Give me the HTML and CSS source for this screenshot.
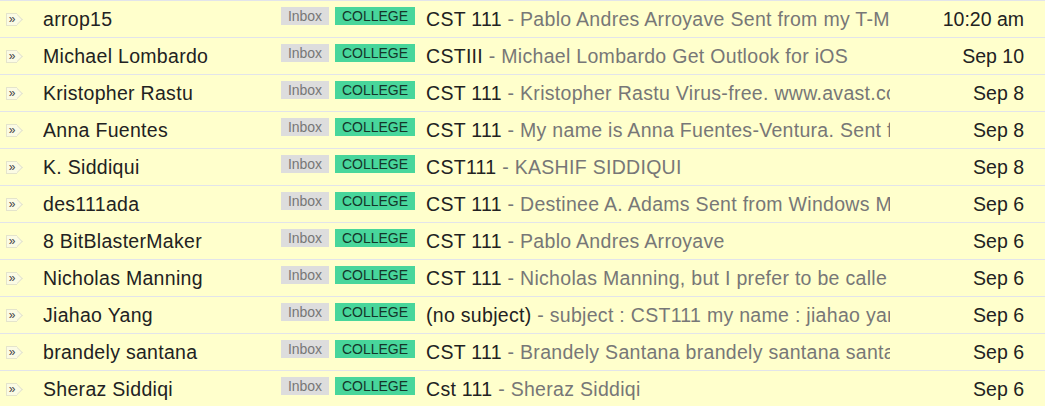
FILE: index.html
```html
<!doctype html>
<html>
<head>
<meta charset="utf-8">
<title>Inbox</title>
<link rel="stylesheet" href="styles.css">
</head>
<body>
<div class="list">
	<div class="row">
		<div class="mark"><span class="imp">&raquo;</span></div>
		<div class="from">arrop15</div>
		<div class="labels"><span class="lb inbox">Inbox</span><span class="lb college">COLLEGE</span></div>
		<div class="subj"><b>CST 111</b><i> - Pablo Andres Arroyave Sent from my T-M</i></div>
		<div class="date">10:20 am</div>
	</div>
	<div class="row">
		<div class="mark"><span class="imp">&raquo;</span></div>
		<div class="from">Michael Lombardo</div>
		<div class="labels"><span class="lb inbox">Inbox</span><span class="lb college">COLLEGE</span></div>
		<div class="subj"><b>CSTIII</b><i> - Michael Lombardo Get Outlook for iOS</i></div>
		<div class="date">Sep 10</div>
	</div>
	<div class="row">
		<div class="mark"><span class="imp">&raquo;</span></div>
		<div class="from">Kristopher Rastu</div>
		<div class="labels"><span class="lb inbox">Inbox</span><span class="lb college">COLLEGE</span></div>
		<div class="subj"><b>CST 111</b><i> - Kristopher Rastu Virus-free. www.avast.co</i></div>
		<div class="date">Sep 8</div>
	</div>
	<div class="row">
		<div class="mark"><span class="imp">&raquo;</span></div>
		<div class="from">Anna Fuentes</div>
		<div class="labels"><span class="lb inbox">Inbox</span><span class="lb college">COLLEGE</span></div>
		<div class="subj"><b>CST 111</b><i> - My name is Anna Fuentes-Ventura. Sent f</i></div>
		<div class="date">Sep 8</div>
	</div>
	<div class="row">
		<div class="mark"><span class="imp">&raquo;</span></div>
		<div class="from">K. Siddiqui</div>
		<div class="labels"><span class="lb inbox">Inbox</span><span class="lb college">COLLEGE</span></div>
		<div class="subj"><b>CST111</b><i> - KASHIF SIDDIQUI</i></div>
		<div class="date">Sep 8</div>
	</div>
	<div class="row">
		<div class="mark"><span class="imp">&raquo;</span></div>
		<div class="from">des111ada</div>
		<div class="labels"><span class="lb inbox">Inbox</span><span class="lb college">COLLEGE</span></div>
		<div class="subj"><b>CST 111</b><i> - Destinee A. Adams Sent from Windows M</i></div>
		<div class="date">Sep 6</div>
	</div>
	<div class="row">
		<div class="mark"><span class="imp">&raquo;</span></div>
		<div class="from">8 BitBlasterMaker</div>
		<div class="labels"><span class="lb inbox">Inbox</span><span class="lb college">COLLEGE</span></div>
		<div class="subj"><b>CST 111</b><i> - Pablo Andres Arroyave</i></div>
		<div class="date">Sep 6</div>
	</div>
	<div class="row">
		<div class="mark"><span class="imp">&raquo;</span></div>
		<div class="from">Nicholas Manning</div>
		<div class="labels"><span class="lb inbox">Inbox</span><span class="lb college">COLLEGE</span></div>
		<div class="subj"><b>CST 111</b><i> - Nicholas Manning, but I prefer to be calle</i></div>
		<div class="date">Sep 6</div>
	</div>
	<div class="row">
		<div class="mark"><span class="imp">&raquo;</span></div>
		<div class="from">Jiahao Yang</div>
		<div class="labels"><span class="lb inbox">Inbox</span><span class="lb college">COLLEGE</span></div>
		<div class="subj"><b>(no subject)</b><i> - subject : CST111 my name : jiahao yar</i></div>
		<div class="date">Sep 6</div>
	</div>
	<div class="row">
		<div class="mark"><span class="imp">&raquo;</span></div>
		<div class="from">brandely santana</div>
		<div class="labels"><span class="lb inbox">Inbox</span><span class="lb college">COLLEGE</span></div>
		<div class="subj"><b>CST 111</b><i> - Brandely Santana brandely santana santa</i></div>
		<div class="date">Sep 6</div>
	</div>
	<div class="row">
		<div class="mark"><span class="imp">&raquo;</span></div>
		<div class="from">Sheraz Siddiqi</div>
		<div class="labels"><span class="lb inbox">Inbox</span><span class="lb college">COLLEGE</span></div>
		<div class="subj"><b>Cst 111</b><i> - Sheraz Siddiqi</i></div>
		<div class="date">Sep 6</div>
	</div>
</div>
</body>
</html>
```
FILE: styles.css
```css
*{ margin:0; padding:0;}
body{ background:#ffffcc; font-family:"Liberation Sans", Arial, sans-serif; color:#222;}

.list{ width:1045px;}
.row{ display:flex; align-items:center; height:36px; border-top:1px solid #e2e4ea; font-size:19.5px; letter-spacing:0.3px; white-space:nowrap;}

.mark{ width:43px; flex:none;}
.from{ width:238px; flex:none; overflow:hidden;}
.labels{ width:145px; flex:none; display:flex; align-self:flex-start; margin-top:6px; letter-spacing:0;}
.subj{ width:464px; flex:none; overflow:hidden;}
.date{ flex:1; text-align:right; padding-right:21px; letter-spacing:0;}

.imp{ display:block; position:relative; width:10px; height:11px; margin:1px 0 0 6px; border:1px solid #e4e4cc; border-right:0; background:#fbfbe4; color:#444; font-size:12px; line-height:11px; text-align:center; letter-spacing:0;}
.imp:after{ content:''; position:absolute; right:-4px; top:1px; width:8px; height:8px; border-top:1px solid #e4e4cc; border-right:1px solid #e4e4cc; background:#fbfbe4; transform:rotate(45deg); z-index:-1;}

.lb{ display:block; height:18px; line-height:18px; font-size:14px; text-align:center;}
.inbox{ width:48px; background:#dddddd; color:#777;}
.college{ width:80px; margin-left:6px; background:#48d69b; color:#14352a;}

.subj b{ font-weight:normal; color:#222;}
.subj i{ font-style:normal; color:#777;}
```
